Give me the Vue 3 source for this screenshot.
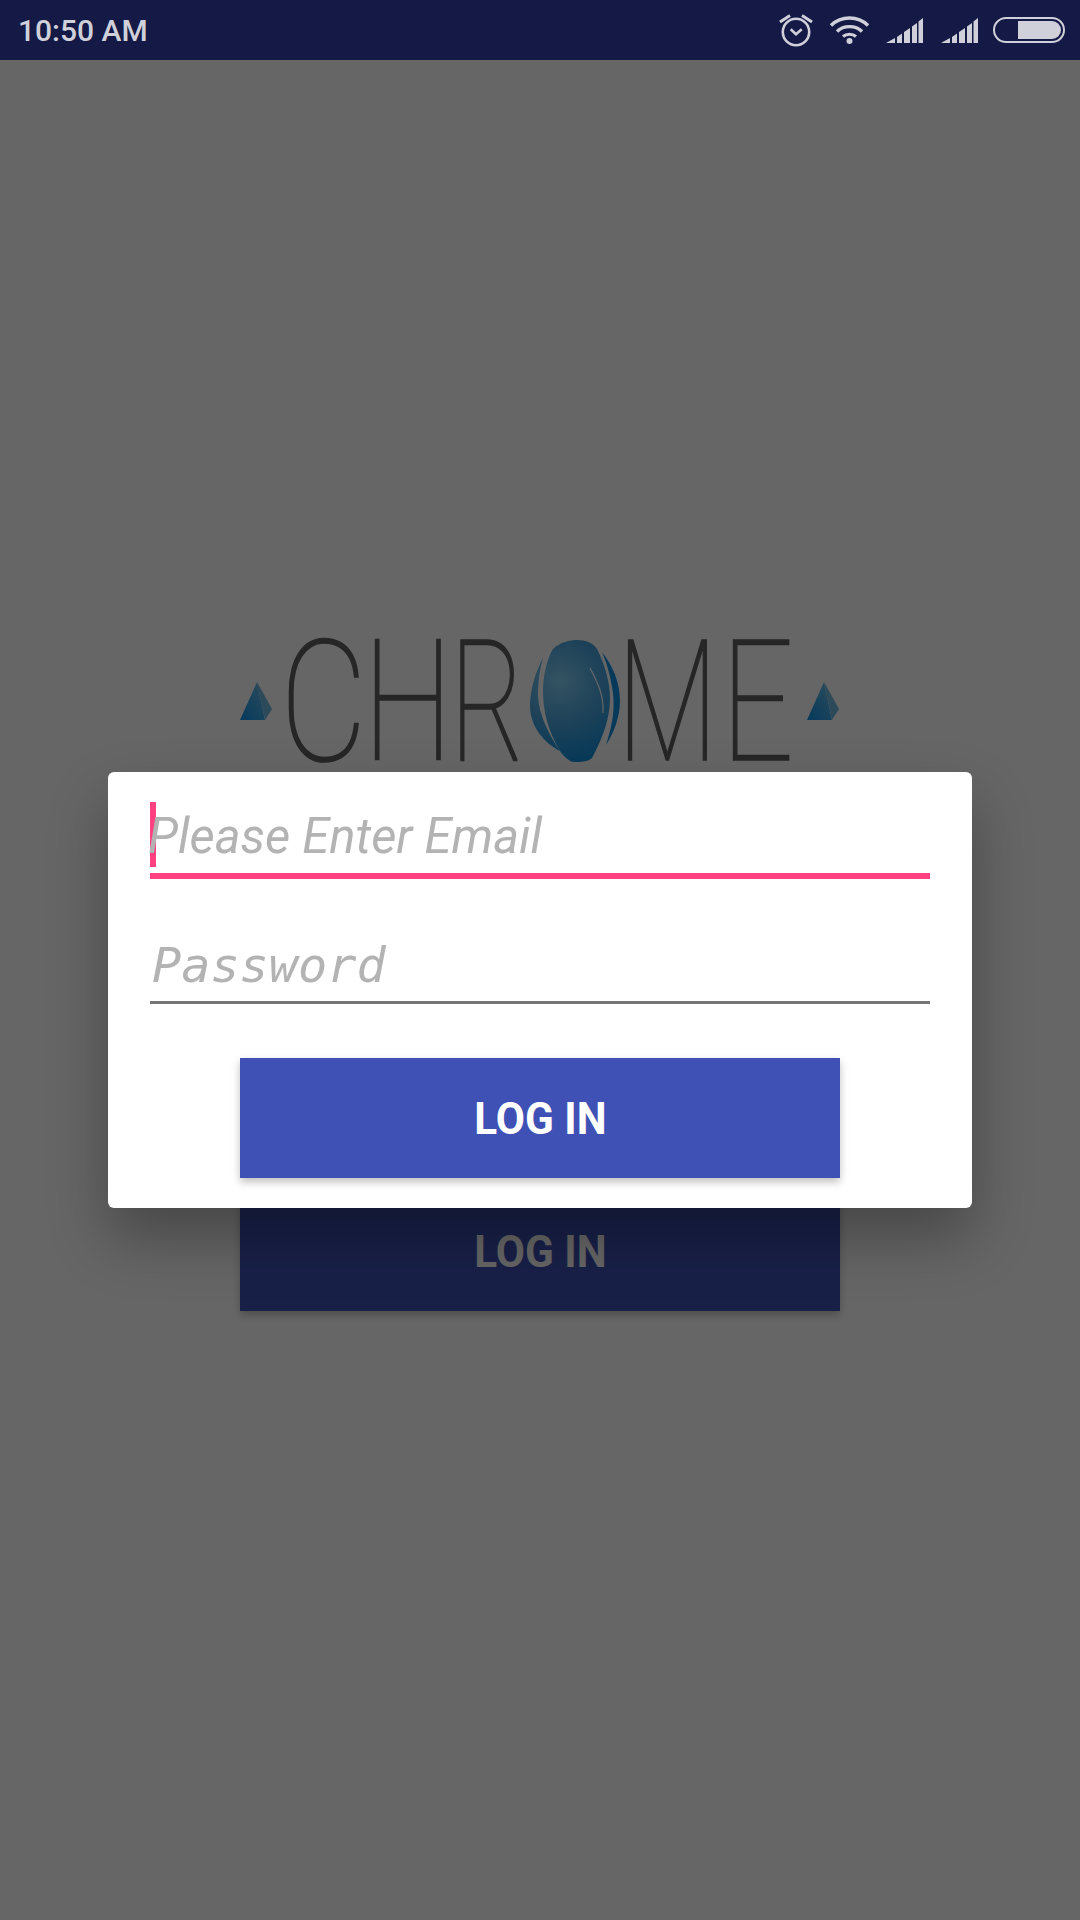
<script setup>
const bars = [
  'M0 25 L9 20 V25 Z',
  'M11 19 L16 15.5 V25 H11 Z',
  'M18 14 L24 10 V25 H18 Z',
  'M26 8.5 L31 5 V25 H26 Z',
  'M32.5 3.5 L37 0 V25 H32.5 Z',
]
</script>

<template>
  <div class="phone">
    <header class="status-bar">
      <span class="clock">10:50 AM</span>
      <div class="status-icons">
        <svg class="ic-alarm" width="34" height="33" viewBox="0 0 34 33">
          <circle cx="17" cy="18" r="13.2" fill="none" stroke="#d0d0da" stroke-width="2.6" />
          <path d="M11.7 15.3 L17 20.3 L22.7 15.3" fill="none" stroke="#d0d0da" stroke-width="2.6" />
          <path d="M1 8 L11 1.5 M33 8 L23 1.5" fill="none" stroke="#d0d0da" stroke-width="3" />
        </svg>
        <svg class="ic-wifi" width="39" height="28" viewBox="0 0 39 28">
          <path d="M1 9.5 C11 -0.5 28 -0.5 38 9.5" fill="none" stroke="#d0d0da" stroke-width="3.4" />
          <path d="M7 15.5 C13.5 9 25.5 9 32 15.5" fill="none" stroke="#d0d0da" stroke-width="3.4" />
          <path d="M13 20.5 C16.5 17.5 22.5 17.5 26 20.5" fill="none" stroke="#d0d0da" stroke-width="3.2" />
          <circle cx="19.5" cy="25" r="3" fill="#d0d0da" />
        </svg>
        <svg class="ic-signal" width="37" height="25" viewBox="0 0 37 25">
          <path v-for="d in bars" :key="d" :d="d" fill="#d0d0da" />
        </svg>
        <svg class="ic-signal second" width="37" height="25" viewBox="0 0 37 25">
          <path v-for="d in bars" :key="d" :d="d" fill="#d0d0da" />
        </svg>
        <div class="battery"><div class="battery-fill"></div></div>
      </div>
    </header>

    <main class="screen">
      <div class="logo">
        <svg class="pyramid" width="33" height="39" viewBox="0 0 33 39">
          <defs>
            <linearGradient id="pyrA" x1="0" y1="1" x2="0.7" y2="0.2">
              <stop offset="0" stop-color="#0f8fe6" />
              <stop offset="1" stop-color="#58b4e6" />
            </linearGradient>
          </defs>
          <path d="M17 0 L0 38 H25 Z" fill="url(#pyrA)" />
          <path d="M17 0 L25 38 L32 27 Z" fill="#6fb9e0" />
        </svg>
        <span class="glyph g-c">C</span>
        <span class="glyph g-h">H</span>
        <span class="glyph g-r">R</span>
        <svg class="ball" width="90" height="122" viewBox="10 19 90 122">
          <defs>
            <radialGradient id="ballFill" gradientUnits="userSpaceOnUse" cx="40" cy="60" r="85">
              <stop offset="0" stop-color="#84d0f5" />
              <stop offset="0.5" stop-color="#4aa4dc" />
              <stop offset="1" stop-color="#0f90e0" />
            </radialGradient>
          </defs>
          <path d="M33 28 C40 21 50 19 57 19 C66 19 73 22 77 28 C84 42 90 60 90 78 C90 100 80 122 72 137 C68 141 60 141 54 141 C50 141 44 136 40 130 C28 110 23 90 23 70 C23 55 27 38 33 28 Z" fill="url(#ballFill)" />
          <path d="M23 37 C15 52 10 70 10 85 C10 105 24 122 40 130 C30 115 19 95 18 75 C18 60 20 47 23 37 Z" fill="url(#ballFill)" />
          <path d="M82 31 C93 45 100 62 100 80 C100 95 94 112 86 124 C92 105 95 90 93 72 C91 58 88 45 82 31 Z" fill="#0f90e0" />
          <path d="M70 47 C78 62 84 75 83 92" fill="none" stroke="#ffffff" stroke-width="1.2" />
        </svg>
        <span class="glyph g-m">M</span>
        <span class="glyph g-e">E</span>
        <svg class="pyramid" width="33" height="39" viewBox="0 0 33 39">
          <path d="M17 0 L0 38 H25 Z" fill="url(#pyrA)" />
          <path d="M17 0 L25 38 L32 27 Z" fill="#6fb9e0" />
        </svg>
      </div>
      <button class="login-btn under"><span>LOG IN</span></button>
    </main>

    <div class="scrim">
      <section class="dialog">
        <div class="field focused">
          <span class="caret"></span>
          <span class="hint">Please Enter Email</span>
        </div>
        <div class="field pass">
          <span class="hint mono">Password</span>
        </div>
        <button class="login-btn"><span>LOG IN</span></button>
      </section>
    </div>
  </div>
</template>

<style scoped>
.phone {
  position: relative;
  width: 1080px;
  height: 1920px;
  background: #fff;
  overflow: hidden;
  font-family: Roboto, "Liberation Sans", sans-serif;
}

.status-bar {
  height: 60px;
  background: #141a45;
  display: flex;
  align-items: center;
  justify-content: space-between;
  box-sizing: border-box;
  padding: 0 15px 0 18px;
  color: #d0d0da;
}

.clock {
  font-size: 30px;
  font-weight: 500;
}

.status-icons {
  display: flex;
  align-items: center;
}
.ic-alarm { margin-right: 17px; }
.ic-wifi { margin-right: 17px; }
.ic-signal.second { margin-left: 18px; margin-right: 15px; }

.battery {
  width: 72px;
  height: 26px;
  box-sizing: border-box;
  border: 2px solid #d0d0da;
  border-radius: 13px;
  display: flex;
  justify-content: flex-end;
  padding: 2px;
}
.battery-fill {
  width: 43px;
  background: #d0d0da;
  border-radius: 0 9px 9px 0;
}

.screen {
  display: flex;
  flex-direction: column;
  align-items: center;
}

.logo {
  width: 600px;
  height: 122px;
  margin-top: 580px;
  display: flex;
  align-items: flex-end;
  color: #606060;
}
.pyramid { margin-bottom: 41px; flex: none; }
.glyph {
  display: block;
  flex: none;
  font-family: Roboto, sans-serif;
  font-weight: 100;
  font-size: 168px;
  line-height: 122px;
  height: 122px;
  margin-bottom: -2px;
  -webkit-text-stroke: 1.7px #606060;
  transform-origin: left center;
}
.g-c { width: 83px; margin-left: 7px; transform: scaleX(0.8); }
.g-h { width: 87px; transform: scaleX(0.76); }
.g-r { width: 80px; transform: scaleX(0.68); }
.ball { flex: none; }
.g-m { width: 104px; margin-left: -3px; transform: scaleX(0.7); }
.g-e { width: 86px; transform: scaleX(0.76); }

.login-btn {
  display: block;
  width: 600px;
  height: 120px;
  border: none;
  padding: 1px 0 0;
  background: #3f51b5;
  color: #fff;
  font-family: Roboto, sans-serif;
  font-weight: 700;
  font-size: 45px;
  box-shadow: 0 4px 8px rgba(0, 0, 0, 0.25);
}
.login-btn span {
  display: inline-block;
  transform: scaleX(0.94);
}
.login-btn.under {
  margin-top: 429px;
}

.scrim {
  position: absolute;
  top: 60px;
  left: 0;
  right: 0;
  bottom: 0;
  background: rgba(0, 0, 0, 0.6);
  display: flex;
  align-items: center;
  justify-content: center;
}

.dialog {
  width: 864px;
  height: 436px;
  box-sizing: border-box;
  background: #fff;
  border-radius: 6px;
  padding: 30px 42px 0;
  box-shadow: 0 30px 60px rgba(0, 0, 0, 0.3);
  display: flex;
  flex-direction: column;
  align-items: center;
}

.field {
  position: relative;
  width: 100%;
  box-sizing: border-box;
  height: 77px;
  border-bottom: 6px solid #ff4081;
  display: flex;
  align-items: flex-end;
}
.field.pass {
  height: 83px;
  margin-top: 42px;
  border-bottom: 3px solid #757575;
}

.caret {
  position: absolute;
  left: 0;
  top: 0;
  width: 6px;
  height: 65px;
  background: #ff4081;
}

.hint {
  position: relative;
  font-style: italic;
  font-size: 49px;
  line-height: 60px;
  color: #b3b3b3;
  margin-bottom: 6px;
  margin-left: -2px;
}
.hint.mono {
  font-family: "DejaVu Sans Mono", monospace;
  font-size: 48.5px;
  margin-left: 2px;
}

.dialog > .login-btn {
  margin-top: 54px;
  flex: none;
}
</style>
